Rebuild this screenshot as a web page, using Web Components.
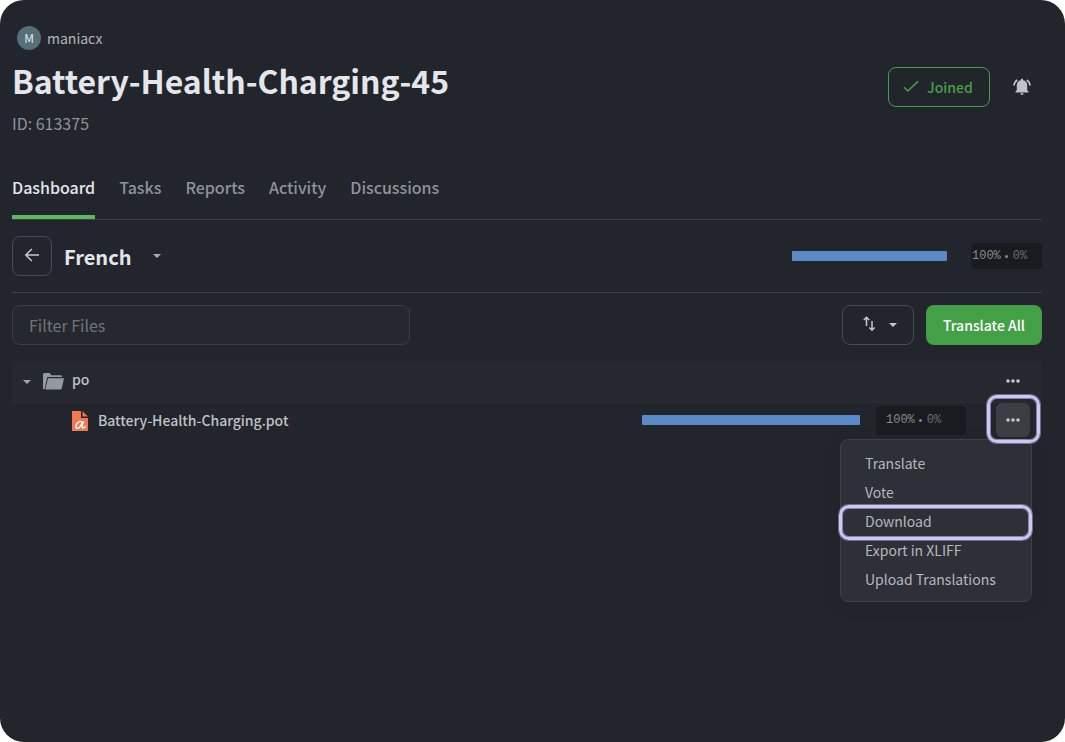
<!DOCTYPE html>
<html lang="en">
<head>
<meta charset="utf-8">
<title>Battery-Health-Charging-45</title>
<style>
html{background:#fff}
body{margin:0;width:1065px;height:742px;overflow:hidden;font-family:"Noto Sans CJK SC","Noto Sans",sans-serif;color:#bfc2c7}
</style>
</head>
<body>
<project-page></project-page>
<script>
function define(name, html) {
  customElements.define(name, class extends HTMLElement {
    connectedCallback() {
      if (this.shadowRoot) return;
      const t = document.createElement('template');
      t.innerHTML = html;
      this.attachShadow({ mode: 'open' }).append(t.content.cloneNode(true));
    }
  });
}

define('user-badge', `<style>
:host{display:flex;align-items:center;gap:6px;height:24px;font-size:14px;line-height:24px;color:#b4b7bc}
.a{width:24px;height:24px;border-radius:50%;background:#546e7a;color:#e4e8ea;font-size:12px;text-align:center}
</style><span class="a">M</span><span><slot></slot></span>`);

define('joined-button', `<style>
:host{display:flex;box-sizing:border-box;width:102px;height:40px;border:1px solid #43a047;border-radius:8px;align-items:center;padding-left:14px;gap:8px;color:#43a047;font-size:14px;font-weight:500;line-height:38px}
</style><svg width="16" height="14" viewBox="0 0 16 14"><path d="M1 7.200 4.800 11 15 1.300" fill="none" stroke="#43a047" stroke-width="1.600"/></svg><span><slot></slot></span>`);

define('bell-icon', `<style>:host{display:block;width:18px;height:18px}svg{display:block}</style>
<svg width="18" height="18" viewBox="0 0 18 18"><path d="M9 .7c.7 0 1.100.5 1.100 1.100v.5C12.600 2.800 14.200 4.600 14.200 7v5l1.300 1.700v.8H2.500v-.8L3.800 12V7c0-2.400 1.600-4.200 4.100-4.700v-.5C7.900 1.200 8.300.7 9 .7zM7.300 15.300h3.400a1.700 1.700 0 0 1-3.400 0z" fill="#bfc2c7"/><path d="M4.200 2C2.300 3.300 1.200 5 1 7.500M13.800 2c1.900 1.300 3 3 3.200 5.500" fill="none" stroke="#bfc2c7" stroke-width="1.700"/></svg>`);

define('tab-item', `<style>
:host{display:block;box-sizing:border-box;height:59px;padding-top:15px;font-size:16px;font-weight:500;line-height:24px;letter-spacing:-.015px;color:#8d939b;border-bottom:4px solid transparent}
:host([active]){color:#e3e6ea;border-color:#5cb85c}
</style><slot></slot>`);

define('tab-bar', `<style>
:host{display:flex;gap:24px;height:59px;border-bottom:1px solid #3b3e45}
</style><slot></slot>`);

define('caret-icon', `<style>:host{display:block;width:8px;height:4px}svg{display:block}</style>
<svg width="8" height="4" viewBox="0 0 8 4"><path d="M0 0h8L4 4z" fill="currentColor"/></svg>`);

define('progress-line', `<style>:host{display:block;height:10px;border-radius:1px;background:#5b8ac8}</style>`);

define('percent-box', `<style>
:host{display:flex;box-sizing:border-box;align-items:flex-start;background:#181b1f;border-radius:4px;padding-top:1px;font:12px/24px "Liberation Mono",monospace;color:#8b8b88;white-space:nowrap}
.dot{width:3px;height:3px;border-radius:50%;background:#85888c;margin:11px 5px 0 4px}
.z{color:#686d73}
</style><span>100%</span><i class="dot"></i><span class="z">0%</span>`);

define('dots-icon', `<style>:host{display:block;width:14px;height:4px}svg{display:block}</style>
<svg width="14" height="4" viewBox="0 0 14 4" fill="#c5c8cc"><circle cx="2" cy="2" r="1.800"/><circle cx="7" cy="2" r="1.800"/><circle cx="12" cy="2" r="1.800"/></svg>`);

define('language-bar', `<style>
:host{display:flex;align-items:center;box-sizing:border-box;height:73px;border-bottom:1px solid #3b3e45}
.back{display:flex;align-items:center;justify-content:center;box-sizing:border-box;width:40px;height:40px;border:1px solid #4a4b4e;border-radius:8px}
h2{margin:2px 0 0 12px;font-size:20px;line-height:32px;font-weight:700;color:#e3e6ea;width:89px}
caret-icon{color:#a7adb7}
progress-line{width:155px;margin-left:auto}
percent-box{width:71px;height:26px;margin-left:24px;padding-left:1px}
</style>
<span class="back"><svg width="16" height="16" viewBox="0 0 16 16"><path d="M15 7H2M7.800 1l-6 6 6 6" fill="none" stroke="#c5c8cc" stroke-width="1.500"/></svg></span>
<h2><slot></slot></h2><caret-icon></caret-icon><progress-line></progress-line><percent-box></percent-box>`);

define('file-toolbar', `<style>
:host{display:flex;height:40px;padding-top:12px}
.filter{box-sizing:border-box;width:398px;height:40px;border:1px solid #3b3e43;border-radius:8px;background:#25282e;padding-left:16px;font-size:16px;line-height:38px;color:#70747a;margin-right:auto}
.sort{display:flex;align-items:center;box-sizing:border-box;width:72px;height:40px;border:1px solid #4a4b4e;border-radius:8px;padding-left:19px;gap:13px;color:#c5c8cc}
.sort svg{margin-top:-3px}
.all{width:116px;height:40px;margin-left:12px;border-radius:8px;background:#43a047;color:#fff;font-size:14px;font-weight:500;line-height:40px;text-align:center}
</style>
<div class="filter">Filter Files</div>
<div class="sort"><svg width="14" height="17" viewBox="0 0 14 17"><path d="M4.500 11V2.500M1.800 5l2.700-2.700L7.200 5M10 6v9M7.300 12.500l2.700 2.700 2.700-2.700" fill="none" stroke="#c5c8cc" stroke-width="1.500"/></svg><caret-icon></caret-icon></div>
<div class="all">Translate All</div>`);

define('folder-row', `<style>
:host{display:flex;align-items:center;box-sizing:border-box;height:42px;margin-top:16px;padding:0 22px 0 11px;background:#25282e;border-bottom:1px solid #292c32;font-size:14px;line-height:24px;font-weight:500}
caret-icon{color:#a0a5ad;margin-top:1px}
svg{margin:-1px 8px 0 12px}
span{margin-top:-5px}
dots-icon{margin:-2px 0 0 auto}
</style><caret-icon></caret-icon>
<svg width="21" height="17" viewBox="0 0 21 17"><path d="M0 16V1.500Q0 0 1.500 0h5l2 2.200h9.200q1.300 0 1.300 1.300v.5H4.300L1.700 16z" fill="#9299a3"/><path d="M5 5.200h16L18.800 15.500q-.2 1-1.200 1H2.300z" fill="#9299a3"/></svg>
<span><slot></slot></span><dots-icon></dots-icon>`);

define('file-row', `<style>
:host{display:flex;align-items:center;box-sizing:border-box;height:34px;padding:0 12px 0 60px;font-size:14px;line-height:24px;font-weight:500}
svg{margin-top:2px}
.name{margin:-1px auto 0 10px;letter-spacing:-.02px}
progress-line{width:218px}
percent-box{width:90px;height:29px;margin:1px 30px 0 16px;padding:2px 0 0 10px}
.more{display:flex;align-items:center;justify-content:center;position:relative;width:34px;height:34px;border-radius:6px;background:#3c3e43}
.more i{position:absolute;left:-9px;top:-8px;width:47px;height:42px;border:3px solid #cfc5f6;border-radius:10px;box-shadow:0 0 0 1px #cfc5f670,inset 0 0 0 1px #cfc5f690}
</style>
<svg width="16" height="20" viewBox="0 0 16 20"><path d="M0 0h9v7h7v13H0z" fill="#f07850"/><path d="M10.500.2V5.600H16z" fill="#f07850"/><path d="M9.800 10.800C8.400 9.600 5.800 11 4.600 13.200c-1.400 2.700-.5 4.600 1.200 4.100 1.800-.5 3.500-3.300 4.600-6l1-.2c-1.200 2.900-1.600 5.300-.8 5.800.9.500 2.100-.6 3-1.800" fill="none" stroke="#fff" stroke-width="1.400"/></svg>
<span class="name"><slot></slot></span><progress-line></progress-line><percent-box></percent-box>
<span class="more"><dots-icon></dots-icon><i></i></span>`);

define('menu-item', `<style>
:host{display:block;position:relative;height:29px;padding-left:24px;font-size:14px;line-height:29px;white-space:nowrap}
i{display:none}
:host([marked]) i{display:block;position:absolute;left:-2px;top:-2px;width:187px;height:29px;border:3px solid #cfc5f6;border-radius:10px;box-shadow:0 0 0 1px #cfc5f670,inset 0 0 0 1px #cfc5f690}
</style><slot></slot><i></i>`);

define('context-menu', `<style>
:host{display:block;position:absolute;left:840px;top:439px;box-sizing:border-box;width:192px;height:163px;padding-top:9px;border:1px solid #3d4046;border-radius:8px;background:#2d3037;box-shadow:0 4px 20px rgba(0,0,0,.08);color:#b5b8bd}
</style><slot></slot>`);

define('project-header', `<style>
:host{display:flex;height:134px;padding-top:26px;align-items:flex-start}
.info{width:876px}
user-badge{margin-left:5px}
h1{margin:7px 0 0;font-size:32px;line-height:46px;font-weight:700;letter-spacing:-.04px;color:#e3e6ea;white-space:nowrap}
p{margin:8px 0 0;font-size:16px;line-height:24px;color:#8d939b}
joined-button{margin-top:41px}
bell-icon{margin:52px 0 0 23px}
</style><div class="info"><user-badge>maniacx</user-badge><h1>Battery-Health-Charging-45</h1><p>ID: 613375</p></div>
<joined-button>Joined</joined-button><bell-icon></bell-icon>`);

define('project-page', `<style>
:host{display:block;position:relative;box-sizing:border-box;width:1065px;height:742px;padding:0 23px 0 12px;border-radius:24px;background:#22252b;overflow:hidden}
file-row{position:relative;z-index:2}
</style>
<project-header></project-header>
<tab-bar><tab-item active>Dashboard</tab-item><tab-item>Tasks</tab-item><tab-item>Reports</tab-item><tab-item>Activity</tab-item><tab-item>Discussions</tab-item></tab-bar>
<language-bar>French</language-bar>
<file-toolbar></file-toolbar>
<folder-row>po</folder-row>
<file-row>Battery-Health-Charging.pot</file-row>
<context-menu><menu-item>Translate</menu-item><menu-item>Vote</menu-item><menu-item marked>Download</menu-item><menu-item>Export in XLIFF</menu-item><menu-item>Upload Translations</menu-item></context-menu>`);
</script>
</body>
</html>
